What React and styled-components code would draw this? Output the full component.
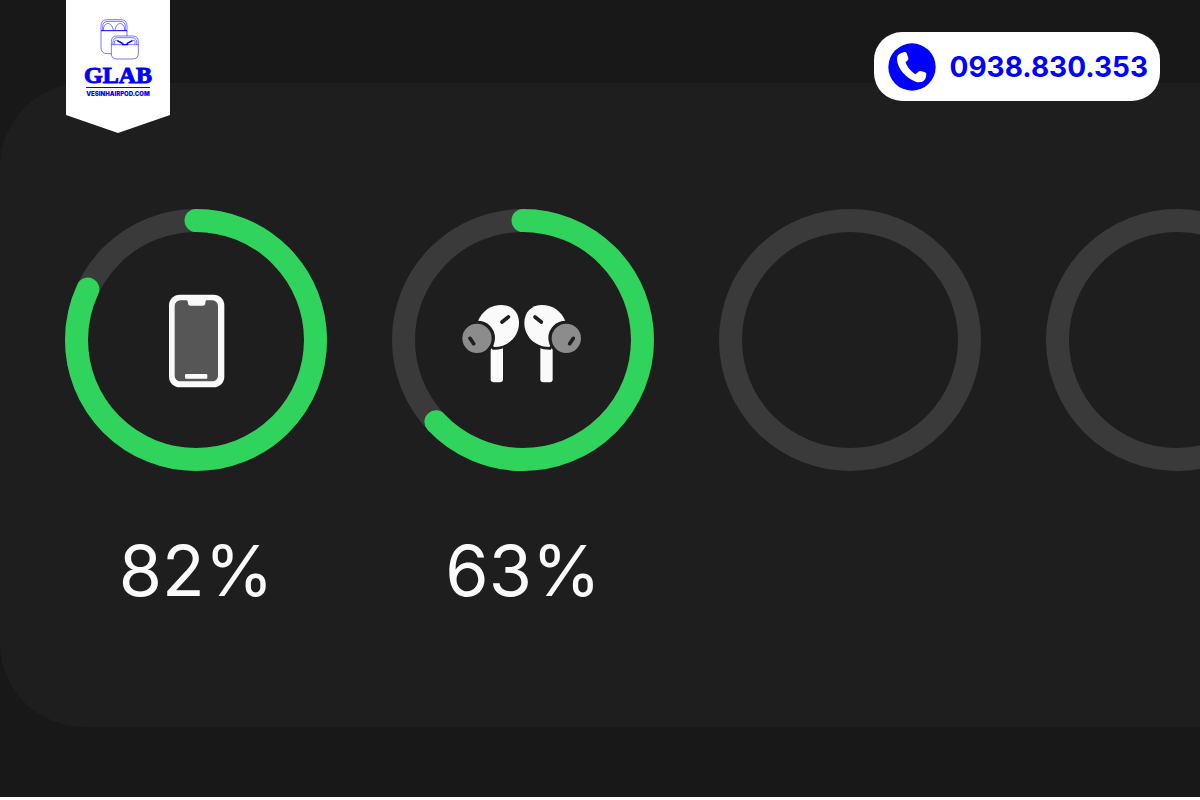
import React from "react";
import styled, { createGlobalStyle } from "styled-components";

const GlobalStyle = createGlobalStyle`
  *, *::before, *::after { box-sizing: border-box; }
  body {
    margin: 0;
    background: #ffffff;
    font-family: Inter, "Liberation Sans", sans-serif;
  }
`;

const Page = styled.div`
  position: relative;
  min-height: 100vh;
  padding-top: 83px;
  background: #181818;
  border-bottom: 3px solid #ffffff;
  overflow: hidden;
`;

const Header = styled.header`
  position: absolute;
  inset: 0 0 auto 0;
  z-index: 1;
  display: flex;
  align-items: flex-start;
  justify-content: space-between;
  padding: 0 40px 0 66px;
`;

const Pennant = styled.a`
  display: flex;
  flex-direction: column;
  align-items: center;
  width: 104px;
  height: 133px;
  padding-top: 19px;
  background: #ffffff;
  color: #0000ff;
  text-decoration: none;
  clip-path: polygon(0 0, 100% 0, 100% 115px, 50% 100%, 0 115px);
`;

const BrandName = styled.span`
  margin-top: 4px;
  font: 700 24px/20px "Liberation Serif", serif;
  -webkit-text-stroke: 1px currentColor;
`;

const BrandSite = styled.span`
  margin-top: 2px;
  padding-top: 2px;
  border-top: 1px solid currentColor;
  font: 900 6px/8px Inter, sans-serif;
`;

const PhonePill = styled.a`
  display: flex;
  align-items: center;
  gap: 14px;
  height: 69px;
  margin-top: 32px;
  padding: 0 12px 0 14px;
  border-radius: 28px;
  background: #ffffff;
  color: #0000ff;
  font-size: 28px;
  font-weight: 700;
  line-height: 36px;
  text-decoration: none;
`;

const Widget = styled.main`
  padding: 126px 0 116px 65px;
  border-radius: 84px 0 0 84px;
  background: #1e1e1e;
  overflow: hidden;
`;

const GaugeRow = styled.ul`
  display: flex;
  gap: 65px;
  margin: 0;
  padding: 0;
  list-style: none;
`;

const GaugeItem = styled.li`
  flex: none;
  display: flex;
  flex-direction: column;
  align-items: center;
  gap: 60px;
`;

const Dial = styled.div`
  display: grid;
  place-items: center;

  > * {
    grid-area: 1 / 1;
  }
`;

const Percent = styled.span`
  color: #fafafa;
  font-size: 70px;
  font-weight: 400;
  line-height: 80px;
`;

function LogoDrawing() {
  return (
    <svg width="44" height="42" viewBox="138 57 132 126" fill="none" stroke="#0000ff" strokeWidth="1.6" aria-hidden="true">
      <path d="M153 93V78Q153 59 172 59H212Q231 59 231 78V108" />
      <path d="M158 92V80Q158 64 174 64H210Q226 64 226 80V92" />
      <path d="M153 92H231" strokeWidth="3" />
      <path d="M153 93V142Q153 161 172 161H184" />
      <path d="M160 91C160 66 184 62 190 90M195 90C200 62 224 66 224 91" />
      <path d="M184 134V125Q184 108 201 108H248Q265 108 265 125V134" />
      <path d="M189 134V127Q189 113 203 113H246Q260 113 260 127V134" />
      <path d="M184 134H265V160Q265 177 248 177H201Q184 177 184 160Z" />
      <path d="M195 133Q190 120 200 121L222 131M254 133Q259 120 249 121L227 131" />
      <path d="M202 122L218 131M247 122L231 131M216 134H234" strokeWidth="4" />
    </svg>
  );
}

function HandsetIcon() {
  return (
    <svg width="48" height="48" viewBox="77 68 144 144" aria-hidden="true">
      <circle cx="149" cy="140" r="71" fill="#0000ff" />
      <path
        fill="#ffffff"
        d="M117 98L126 95Q131 94 133 99L138 113Q139 117 136 120L130 126C134 140 147 154 159 162L168 154Q171 151 175 152L188 156Q193 158 192 163L190 173C186 184 174 189 160 184C131 174 106 144 104 119C103 108 107 101 117 98Z"
      />
    </svg>
  );
}

function PhoneIcon() {
  return (
    <svg width="60" height="100" viewBox="33 15 180 300" role="img" aria-label="iPhone">
      <rect x="42" y="29" width="166" height="278" rx="32" fill="#fafafa" />
      <rect x="59" y="46" width="130" height="243" rx="17" fill="#565656" />
      <path d="M95 44H154Q151 48 151 54Q151 62 143 62H107Q99 62 99 54Q99 48 95 44Z" fill="#fafafa" />
      <rect x="90" y="267" width="67" height="14" rx="3" fill="#fafafa" />
    </svg>
  );
}

function Earbud() {
  return (
    <>
      <rect x="122" y="160" width="37" height="116" rx="9" fill="#fafafa" />
      <path
        d="M83 94C97 60 124 44 154 44C186 44 207 66 207 98C207 137 176 170 132 170Z"
        fill="#fafafa"
        stroke="#1e1e1e"
        strokeWidth="16"
        paintOrder="stroke"
      />
      <circle cx="83" cy="143" r="52" fill="#1e1e1e" />
      <circle cx="81" cy="144" r="44" fill="#8c8c8c" />
      <path d="M156 95L175 80M60 144L71 160" stroke="#1e1e1e" strokeWidth="11" strokeLinecap="round" />
    </>
  );
}

function EarbudsIcon() {
  return (
    <svg width="120" height="90" viewBox="39 14 360 270" overflow="visible" role="img" aria-label="AirPods Pro">
      <Earbud />
      <g transform="translate(430 0) scale(-1 1)">
        <Earbud />
      </g>
    </svg>
  );
}

function Ring({ value }) {
  return (
    <svg width="262" height="262" viewBox="0 0 262 262" fill="none" strokeWidth="23" aria-hidden="true">
      <circle cx="131" cy="131" r="119.5" stroke="#3a3a3a" />
      {value > 0 && (
        <circle
          cx="131"
          cy="131"r="119.5"
          stroke="#30d35b"
          strokeLinecap="round"
          pathLength="100"
          strokeDasharray={`${value} 100`}
          transform="rotate(-90 131 131)"
        />
      )}
    </svg>
  );
}

const gauges = [
  { id: "phone", value: 82, Icon: PhoneIcon },
  { id: "earbuds", value: 63, Icon: EarbudsIcon },
  { id: "empty-1", value: 0 },
  { id: "empty-2", value: 0 },
];

export default function App() {
  return (
    <Page>
      <GlobalStyle />
      <Header>
        <Pennant href="https://vesinhairpod.com">
          <LogoDrawing />
          <BrandName>GLAB</BrandName>
          <BrandSite>VESINHAIRPOD.COM</BrandSite>
        </Pennant>
        <PhonePill href="tel:0938830353">
          <HandsetIcon />
          <span>0938.830.353</span>
        </PhonePill>
      </Header>
      <Widget>
        <GaugeRow>
          {gauges.map(({ id, value, Icon }) => (
            <GaugeItem key={id}>
              <Dial>
                <Ring value={value} />
                {Icon && <Icon />}
              </Dial>
              {value > 0 && <Percent>{value}%</Percent>}
            </GaugeItem>
          ))}
        </GaugeRow>
      </Widget>
    </Page>
  );
}
